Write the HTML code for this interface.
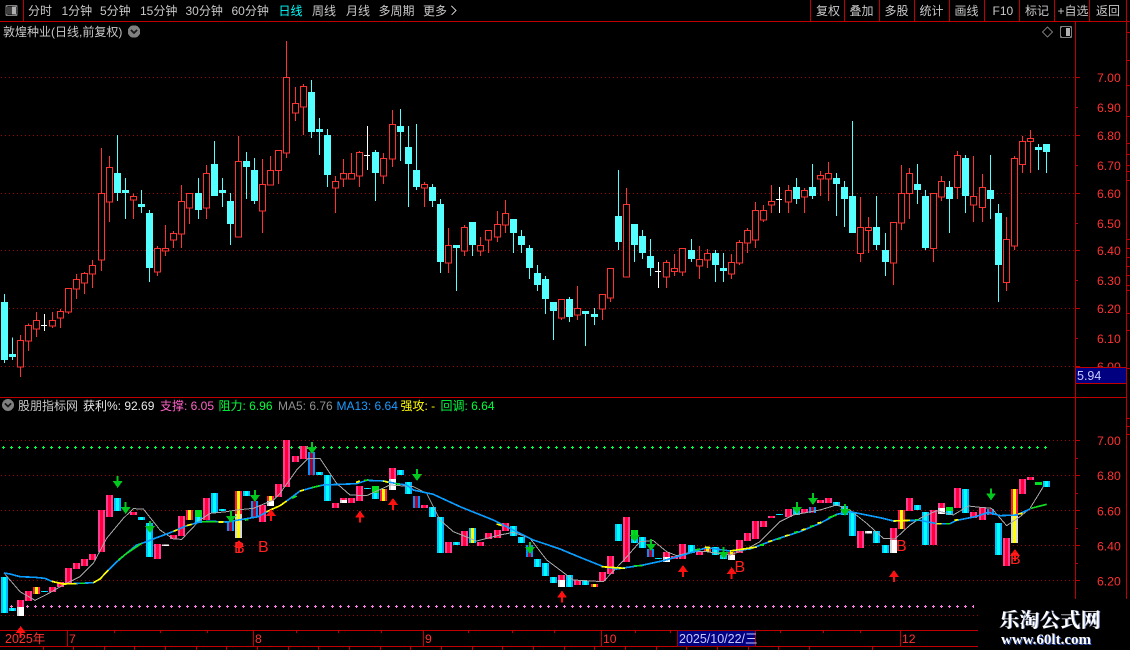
<!DOCTYPE html>
<html><head><meta charset="utf-8"><title>K线</title>
<style>
html,body{margin:0;padding:0;background:#000;width:1130px;height:650px;overflow:hidden}
svg{position:absolute;left:0;top:0;shape-rendering:crispEdges}
text{font-family:"WenQuanYi Zen Hei","Liberation Sans","Noto Sans CJK SC",sans-serif;font-size:12px;fill:#c8c8c8;white-space:pre}
.ax{font-family:"Liberation Sans",sans-serif;fill:#ff3232;font-size:12.2px}
.bb{font-family:"Liberation Sans",sans-serif;fill:#ff2020;font-size:16px}
.bars rect{width:21px}
.r{fill:url(#gr)}.y{fill:url(#gy)}.c{fill:url(#gc)}.w{fill:url(#gw)}.wy{fill:url(#gwy)}.b{fill:url(#gb)}.cy{fill:url(#gcy)}.g{fill:#00e020}
.wm1{position:absolute;left:999px;top:606px;font:bold 20px "Noto Serif CJK SC","Liberation Serif",serif;letter-spacing:.4px;color:#fff;text-shadow:1px 0 #8090c0;white-space:nowrap;line-height:26px}
.wm2{position:absolute;left:1001px;top:632px;font:bold 15px "Liberation Serif",serif;color:#fff;text-shadow:1px 1px #3050b0;white-space:nowrap;line-height:16px}
</style></head><body>
<svg width="1130" height="650" viewBox="0 0 1130 650" xmlns="http://www.w3.org/2000/svg">
<defs>
<linearGradient id="gr"><stop offset=".29" stop-color="#ff3c96"/><stop offset=".29" stop-color="#ff0038"/><stop offset=".71" stop-color="#ff0038"/><stop offset=".71" stop-color="#ff3c96"/></linearGradient>
<linearGradient id="gy"><stop offset=".29" stop-color="#ff1c50"/><stop offset=".29" stop-color="#ffff00"/><stop offset=".71" stop-color="#ffff00"/><stop offset=".71" stop-color="#ff1c50"/></linearGradient>
<linearGradient id="gc"><stop offset=".29" stop-color="#00c8ff"/><stop offset=".29" stop-color="#00ffff"/><stop offset=".71" stop-color="#00ffff"/><stop offset=".71" stop-color="#00b4ff"/></linearGradient>
<linearGradient id="gw"><stop offset=".29" stop-color="#d8d8d8"/><stop offset=".29" stop-color="#ffffff"/></linearGradient>
<linearGradient id="gwy"><stop offset=".29" stop-color="#d8d8d8"/><stop offset=".29" stop-color="#ffff00"/><stop offset=".71" stop-color="#ffff00"/><stop offset=".71" stop-color="#d8d8d8"/></linearGradient>
<linearGradient id="gb"><stop offset=".29" stop-color="#0090ff"/><stop offset=".29" stop-color="#b00028"/><stop offset=".71" stop-color="#b00028"/><stop offset=".71" stop-color="#0090ff"/></linearGradient>
<linearGradient id="gcy"><stop offset=".29" stop-color="#00c8ff"/><stop offset=".29" stop-color="#ffff00"/><stop offset=".71" stop-color="#ffff00"/><stop offset=".71" stop-color="#00c8ff"/></linearGradient>
<path id="dn" fill="#00c81e" d="M-3 0h6V15H15L0 36-15 15H-3z"/>
<path id="up" fill="#ff1010" d="M0 0L15 21H3V36H-3V21H-15z"/>
<pattern id="pg" width="8" height="3" patternUnits="userSpaceOnUse"><rect y="1" width="3" height="1" fill="#00ff40"/><rect x="1" width="1" height="3" fill="#00ff40"/></pattern>
<pattern id="pp" width="8" height="3" patternUnits="userSpaceOnUse"><rect y="1" width="3" height="1" fill="#ff78e0"/><rect x="1" width="1" height="3" fill="#ff78e0"/></pattern>
</defs>

<!-- grid -->
<g stroke="#a00000" stroke-width="1" stroke-dasharray="1 3">
<path d="M1 77.5H1075M1 135.5H1075M1 193.5H1075M1 250.5H1075M1 308.5H1075M1 366.5H1075"/>
<path d="M1 440.5H1075M1 475.5H1075M1 510.5H1075M1 545.5H1075M1 580.5H1075M1 615.5H978"/>
</g>

<!-- toolbar -->
<g stroke="#c00000" stroke-width="1" fill="none">
<path d="M0 21.5H1130M0 397.5H1126M0 630.5H978M0 646.5H978"/>
<path d="M23.5 0V21M810.5 0V21M844.5 0V21M879.5 0V21M914.5 0V21M949.5 0V21M984.5 0V21M1019.5 0V21M1054.5 0V21M1089.5 0V21"/>
<path d="M1075.5 21V599M1126.5 0V599"/>
</g>
<rect x="6" y="5.5" width="11" height="10" rx="1.5" fill="#000" stroke="#808080" stroke-width="1.4"/>
<rect x="7" y="6.5" width="5" height="8" fill="#404040"/>
<rect x="12" y="6.5" width="4" height="8" fill="#b0b0b0"/>
<g>
<text x="28" y="15">分时</text><text x="61.5" y="15">1分钟</text><text x="100" y="15">5分钟</text>
<text x="140" y="15">15分钟</text><text x="185.5" y="15">30分钟</text><text x="231.5" y="15">60分钟</text>
<text x="278.5" y="15" style="fill:#00ffff">日线</text><text x="312" y="15">周线</text><text x="346" y="15">月线</text>
<text x="378.5" y="15">多周期</text><text x="423" y="15">更多</text>
<path d="M451.5 6L456 10.5L451.5 15" fill="none" stroke="#c0c0c0"/>
<text x="816" y="15">复权</text><text x="849.5" y="15">叠加</text><text x="884.5" y="15">多股</text><text x="919.5" y="15">统计</text>
<text x="954.5" y="15">画线</text><text x="992.5" y="15">F10</text><text x="1025" y="15">标记</text><text x="1057.5" y="15">+自选</text><text x="1096" y="15">返回</text>
<text x="3" y="36">敦煌种业(日线,前复权)</text>
</g>
<circle cx="134" cy="31.5" r="6.2" fill="#808080"/>
<path d="M131 30L134 33L137 30" fill="none" stroke="#1a1a1a" stroke-width="1.5"/>
<path d="M1047.5 27L1052.5 32L1047.5 37L1042.5 32Z" fill="none" stroke="#707070"/>
<rect x="1060.5" y="26.5" width="11" height="11" rx="1.5" fill="#000" stroke="#808080" stroke-width="1.4"/>
<rect x="1066" y="28" width="4" height="8" fill="#b0b0b0"/>

<!-- top candles -->
<g transform="translate(.17,40.17) scale(.33333)" stroke-width="3">
<path fill="none" stroke="#ff3232" d="M61 885V1011M85 850V933M109 816V891M157 816V864M181 807V864M205 745V822M229 702V777M253 696V762M277 660V744M304 324V693M328 348V546M400 460V537M472 618V708M496 555V648M520 573V624M544 435V624M568 460V552M619 375V537M715 288V590M787 357V579M811 348V434M835 330V432"/>
<path fill="#000" stroke="#ff3232" d="M52 901h18V980h-18zM76 856h18V902h-18zM100 841h18V866h-18zM148 841h18V857h-18zM172 814h18V833h-18zM196 745h18V815h-18zM220 718h18V746h-18zM244 700h18V728h-18zM268 676h18V701h-18zM295 460h18V659h-18zM319 382h18V485h-18zM391 469h18V479h-18zM463 625h18V695h-18zM487 625h18V632h-18zM511 580h18V599h-18zM535 484h18V581h-18zM559 460h18V503h-18zM610 400h18V503h-18zM706 364h18V590h-18zM778 433h18V513h-18zM802 391h18V434h-18zM826 331h18V391h-18z"/>
<path fill="none" stroke="#54ffff" d="M13 762V969M37 892V960M352 285V483M376 414V537M424 450V519M448 510V726M595 414V537M643 303V468M667 414V501M691 459V615M739 336V477M763 354V492"/>
<path fill="#54ffff" d="M3 786h21V960h-21zM27 942h21V951h-21zM342 399h21V459h-21zM366 450h21V459h-21zM414 492h21V501h-21zM438 519h21V684h-21zM585 459h21V510h-21zM633 372h21V468h-21zM657 450h21V459h-21zM681 483h21V552h-21zM729 363h21V381h-21zM753 390h21V483h-21z"/>
<path fill="none" stroke="#fff" d="M133 822V873M123 856H141"/>
</g>
<g transform="translate(280.17,40.17) scale(.33333)" stroke-width="3">
<path fill="none" stroke="#ff3232" d="M19 3V354M46 141V243M70 132V285M166 408V519M190 357V441M214 339V416M238 333V441M310 339V432M337 210V381M433 426V501M505 564V699M553 555V648M601 591V648M625 571V639M652 513V606M676 480V579"/>
<path fill="#000" stroke="#ff3232" d="M10 112h18V338h-18zM37 190h18V218h-18zM61 139h18V200h-18zM157 424h18V443h-18zM181 400h18V416h-18zM205 400h18V416h-18zM229 337h18V407h-18zM301 355h18V407h-18zM328 253h18V356h-18zM424 433h18V443h-18zM496 616h18V668h-18zM544 562h18V632h-18zM592 616h18V632h-18zM616 571h18V599h-18zM643 553h18V590h-18zM667 520h18V554h-18z"/>
<path fill="none" stroke="#54ffff" d="M94 120V294M118 234V345M142 267V441M286 330V483M361 207V363M385 258V501M409 252V450M457 432V501M481 477V699M529 615V753M577 546V648M700 537V639M724 570V639M748 615V717M772 675V753M796 708V822M820 786V900"/>
<path fill="#54ffff" d="M84 156h21V276h-21zM108 267h21V276h-21zM132 285h21V405h-21zM276 336h21V399h-21zM351 258h21V276h-21zM375 321h21V372h-21zM399 390h21V441h-21zM447 441h21V483h-21zM471 492h21V666h-21zM519 615h21V624h-21zM567 546h21V615h-21zM690 537h21V579h-21zM714 588h21V615h-21zM738 624h21V684h-21zM762 699h21V735h-21zM786 717h21V777h-21zM810 786h21V813h-21z"/>
<path fill="none" stroke="#fff" d="M262 258V390M252 346H270"/>
</g>
<g transform="translate(560.17,40.17) scale(.33333)" stroke-width="3">
<path fill="none" stroke="#ff3232" d="M4 778V840M52 738V840M127 763V840M151 685V786M199 444V710M319 660V744M343 642V708M367 625V708M418 618V717M442 627V684M514 642V717M538 600V675M562 564V639M586 486V624M610 495V546M634 435V519M685 435V519M733 444V519M781 393V468M805 366V483"/>
<path fill="#000" stroke="#ff3232" d="M-5 778h18V833h-18zM43 805h18V824h-18zM118 763h18V806h-18zM142 685h18V773h-18zM190 493h18V710h-18zM310 667h18V710h-18zM334 685h18V694h-18zM358 625h18V695h-18zM409 658h18V677h-18zM433 640h18V659h-18zM505 667h18V701h-18zM529 607h18V668h-18zM553 571h18V608h-18zM577 511h18V599h-18zM601 511h18V539h-18zM625 484h18V494h-18zM676 451h18V485h-18zM724 451h18V470h-18zM772 406h18V416h-18zM796 400h18V416h-18z"/>
<path fill="none" stroke="#54ffff" d="M28 771V846M76 813V918M103 804V855M175 390V630M223 552V666M247 570V657M271 597V708M394 597V666M466 630V726M490 639V726M709 414V492M757 372V477M829 399V528"/>
<path fill="#54ffff" d="M18 777h21V831h-21zM66 813h21V822h-21zM93 822h21V831h-21zM165 528h21V606h-21zM213 552h21V615h-21zM237 588h21V639h-21zM261 648h21V684h-21zM384 630h21V657h-21zM456 639h21V675h-21zM480 684h21V693h-21zM699 441h21V477h-21zM747 441h21V468h-21zM819 414h21V432h-21z"/>
<path fill="none" stroke="#fff" d="M295 666V744M285 694H303M658 441V519M648 478H666"/>
</g>
<g transform="translate(840.17,40.17) scale(.33333)" stroke-width="3">
<path fill="none" stroke="#ff3232" d="M61 471V666M85 531V639M160 547V735M184 375V570M208 384V537M280 460V666M304 408V483M352 333V477M400 348V546M427 402V546M499 531V753M523 348V630M547 288V399M571 270V399"/>
<path fill="#000" stroke="#ff3232" d="M52 562h18V640h-18zM76 562h18V571h-18zM151 547h18V668h-18zM175 460h18V548h-18zM199 400h18V460h-18zM271 460h18V625h-18zM295 424h18V470h-18zM343 346h18V442h-18zM391 469h18V494h-18zM418 442h18V502h-18zM490 598h18V727h-18zM514 355h18V617h-18zM538 304h18V373h-18zM562 295h18V304h-18z"/>
<path fill="none" stroke="#54ffff" d="M13 423V561M37 243V579M109 468V630M136 579V708M232 372V492M256 450V630M328 423V579M376 345V519M451 345V537M475 492V786M595 312V390M619 312V399"/>
<path fill="#54ffff" d="M3 441h21V477h-21zM27 468h21V579h-21zM99 561h21V615h-21zM126 630h21V666h-21zM222 432h21V450h-21zM246 468h21V624h-21zM318 441h21V477h-21zM366 354h21V468h-21zM441 450h21V477h-21zM465 519h21V675h-21zM585 321h21V330h-21zM609 312h21V336h-21z"/>
</g>

<!-- price axis -->
<path stroke="#c00000" fill="none" d="M1075 77.5h5M1075 107.5h3M1075 135.5h5M1075 165.5h3M1075 193.5h5M1075 223.5h3M1075 250.5h5M1075 280.5h3M1075 308.5h5M1075 338.5h3M1075 366.5h5M1126 116.5h4M1126 143.5h4M1126 154.5h4M1126 165.5h4M1126 171.5h4M1126 180.5h4M1126 239.5h4M1126 248.5h4M1126 257.5h4M1126 266.5h4M1126 275.5h4M1126 285.5h4M1126 290.5h4M1126 313.5h4M1126 330.5h4M1126 368.5h4M1126 32.5h4M1126 85.5h4M1126 60.5h4"/>
<g class="axl">
<text class="ax" x="1097" y="82">7.00</text><text class="ax" x="1097" y="112">6.90</text><text class="ax" x="1097" y="140">6.80</text>
<text class="ax" x="1097" y="170">6.70</text><text class="ax" x="1097" y="198">6.60</text><text class="ax" x="1097" y="228">6.50</text>
<text class="ax" x="1097" y="255">6.40</text><text class="ax" x="1097" y="285">6.30</text><text class="ax" x="1097" y="313">6.20</text>
<text class="ax" x="1097" y="343">6.10</text><text class="ax" x="1097" y="371">6.00</text>
</g>
<rect x="1075.5" y="367.5" width="51" height="16" fill="#000080" stroke="#c00000"/>
<text x="1077" y="380" style="fill:#c8c8ff;font-family:'Liberation Sans',sans-serif;font-size:12.5px">5.94</text>

<!-- lower header -->
<circle cx="8" cy="405" r="6" fill="#808080"/>
<path d="M5 403.5L8 406.5L11 403.5" fill="none" stroke="#1a1a1a" stroke-width="1.5"/>
<text x="18" y="410">股朋指标网</text>
<text x="83" y="410" style="fill:#e8e8e8">获利%: 92.69</text>
<text x="160" y="410" style="fill:#ff64c8">支撑: 6.05</text>
<text x="218.5" y="410" style="fill:#00ff40">阻力: 6.96</text>
<text x="278" y="410" style="fill:#909090">MA5: 6.76</text>
<text x="336.5" y="410" style="fill:#1e9cff">MA13: 6.64</text>
<text x="400.5" y="410" style="fill:#ffff00">强攻: -</text>
<text x="440.5" y="410" style="fill:#00ff40">回调: 6.64</text>

<!-- dotted levels -->
<g transform="translate(2,446)"><rect width="350" height="3" fill="url(#pg)"/></g>
<g transform="translate(355,446)"><rect width="344" height="3" fill="url(#pg)"/></g>
<g transform="translate(700,446)"><rect width="347" height="3" fill="url(#pg)"/></g>
<g transform="translate(10,605)"><rect width="320" height="3" fill="url(#pp)"/></g>
<g transform="translate(331,605)"><rect width="320" height="3" fill="url(#pp)"/></g>
<g transform="translate(652,605)"><rect width="322" height="3" fill="url(#pp)"/></g>

<!-- lower bars -->
<g class="bars" transform="translate(0,395) scale(.33333)">
<rect class="c" x="3" y="546" height="108"/><rect class="c" x="27" y="639" height="9"/><rect class="r" x="51" y="615" height="21"/><rect class="w" x="51" y="636" height="27"/><rect class="r" x="75" y="588" height="30"/><rect class="y" x="99" y="576" height="21"/><rect class="c" x="123" y="588" height="3"/><rect class="r" x="147" y="576" height="15"/><rect class="r" x="171" y="561" height="15"/><rect class="r" x="195" y="519" height="45"/><rect class="r" x="219" y="504" height="18"/><rect class="r" x="243" y="492" height="21"/><rect class="r" x="267" y="477" height="18"/><rect class="r" x="294" y="345" height="126"/><rect class="r" x="318" y="300" height="66"/><rect class="c" x="342" y="309" height="39"/><rect class="r" x="390" y="351" height="9"/><rect class="c" x="414" y="366" height="9"/><rect class="c" x="438" y="384" height="102"/><rect class="r" x="462" y="447" height="45"/><rect class="w" x="486" y="449" height="4"/><rect class="r" x="510" y="420" height="12"/><rect class="r" x="534" y="363" height="60"/><rect class="y" x="558" y="345" height="30"/><rect class="g" x="585" y="345" height="21"/><rect class="c" x="585" y="366" height="18"/><rect class="r" x="609" y="309" height="66"/><rect class="c" x="633" y="294" height="60"/><rect class="c" x="657" y="342" height="6"/><rect class="b" x="681" y="379" height="29"/><rect class="y" x="705" y="288" height="69"/><rect class="wy" x="705" y="357" height="72"/><rect class="c" x="729" y="288" height="15"/><rect class="b" x="753" y="318" height="48"/><rect class="r" x="777" y="330" height="51"/><rect class="y" x="801" y="303" height="15"/><rect class="w" x="801" y="318" height="15"/><rect class="r" x="825" y="267" height="39"/><rect class="r" x="849" y="135" height="141"/>
</g>
<g class="bars" transform="translate(280,395) scale(.33333)">
<rect class="r" x="36" y="183" height="18"/><rect class="r" x="60" y="153" height="39"/><rect class="b" x="84" y="171" height="69"/><rect class="c" x="108" y="231" height="9"/><rect class="c" x="132" y="240" height="78"/><rect class="r" x="156" y="324" height="15"/><rect class="r" x="180" y="309" height="6"/><rect class="w" x="180" y="315" height="9"/><rect class="r" x="204" y="309" height="15"/><rect class="r" x="228" y="273" height="45"/><rect class="c" x="252" y="279" height="3"/><rect class="g" x="276" y="273" height="21"/><rect class="c" x="276" y="294" height="18"/><rect class="y" x="300" y="282" height="36"/><rect class="r" x="327" y="219" height="33"/><rect class="w" x="327" y="252" height="33"/><rect class="c" x="351" y="225" height="15"/><rect class="c" x="375" y="261" height="36"/><rect class="b" x="399" y="303" height="36"/><rect class="r" x="423" y="330" height="9"/><rect class="c" x="447" y="336" height="30"/><rect class="c" x="471" y="366" height="108"/><rect class="r" x="495" y="441" height="33"/><rect class="c" x="519" y="441" height="9"/><rect class="r" x="543" y="408" height="45"/><rect class="cy" x="567" y="399" height="45"/><rect class="r" x="591" y="441" height="12"/><rect class="r" x="615" y="414" height="18"/><rect class="r" x="642" y="405" height="24"/><rect class="r" x="666" y="384" height="24"/><rect class="c" x="690" y="393" height="30"/><rect class="c" x="714" y="426" height="18"/><rect class="b" x="738" y="450" height="36"/><rect class="c" x="762" y="492" height="24"/><rect class="c" x="786" y="504" height="39"/><rect class="c" x="810" y="546" height="18"/><rect class="r" x="834" y="540" height="15"/><rect class="w" x="834" y="555" height="21"/><rect class="c" x="858" y="540" height="36"/>
</g>
<g class="bars" transform="translate(560,395) scale(.33333)">
<rect class="r" x="42" y="555" height="15"/><rect class="c" x="66" y="558" height="12"/><rect class="y" x="93" y="567" height="9"/><rect class="r" x="117" y="531" height="27"/><rect class="r" x="141" y="483" height="54"/><rect class="c" x="165" y="387" height="51"/><rect class="r" x="189" y="366" height="135"/><rect class="g" x="213" y="405" height="27"/><rect class="c" x="213" y="432" height="12"/><rect class="c" x="237" y="426" height="33"/><rect class="b" x="261" y="462" height="24"/><rect class="c" x="285" y="489" height="3"/><rect class="r" x="309" y="471" height="15"/><rect class="w" x="309" y="486" height="15"/><rect class="r" x="333" y="483" height="9"/><rect class="r" x="357" y="447" height="45"/><rect class="c" x="384" y="450" height="24"/><rect class="r" x="408" y="468" height="12"/><rect class="y" x="432" y="456" height="15"/><rect class="c" x="456" y="456" height="24"/><rect class="c" x="480" y="480" height="12"/><rect class="y" x="504" y="471" height="9"/><rect class="w" x="504" y="480" height="15"/><rect class="r" x="528" y="435" height="39"/><rect class="r" x="552" y="414" height="24"/><rect class="r" x="576" y="378" height="54"/><rect class="r" x="600" y="378" height="18"/><rect class="r" x="624" y="363" height="6"/><rect class="c" x="648" y="357" height="3"/><rect class="r" x="675" y="342" height="24"/><rect class="c" x="699" y="342" height="18"/><rect class="r" x="723" y="342" height="12"/><rect class="b" x="747" y="336" height="18"/><rect class="r" x="771" y="315" height="9"/><rect class="r" x="795" y="309" height="15"/><rect class="c" x="819" y="321" height="12"/><rect class="c" x="843" y="333" height="27"/>
</g>
<g class="bars" transform="translate(840,395) scale(.33333)">
<rect class="c" x="27" y="351" height="72"/><rect class="r" x="51" y="408" height="51"/><rect class="w" x="75" y="408" height="8"/><rect class="c" x="99" y="408" height="36"/><rect class="c" x="126" y="450" height="24"/><rect class="r" x="150" y="399" height="36"/><rect class="w" x="150" y="435" height="39"/><rect class="y" x="174" y="345" height="57"/><rect class="r" x="198" y="309" height="39"/><rect class="c" x="222" y="330" height="15"/><rect class="c" x="246" y="351" height="99"/><rect class="r" x="270" y="345" height="105"/><rect class="r" x="294" y="324" height="15"/><rect class="w" x="294" y="339" height="18"/><rect class="g" x="318" y="336" height="12"/><rect class="c" x="318" y="348" height="12"/><rect class="r" x="342" y="279" height="60"/><rect class="c" x="366" y="282" height="72"/><rect class="r" x="390" y="351" height="18"/><rect class="r" x="417" y="336" height="39"/><rect class="b" x="441" y="342" height="18"/><rect class="c" x="465" y="384" height="96"/><rect class="r" x="489" y="429" height="84"/><rect class="y" x="513" y="282" height="81"/><rect class="wy" x="513" y="363" height="81"/><rect class="r" x="537" y="252" height="45"/><rect class="r" x="561" y="246" height="9"/><rect class="g" x="585" y="261" height="9"/><rect class="c" x="609" y="258" height="18"/>
</g>

<!-- lines -->
<g fill="none" transform="translate(0,395) scale(.33333)">
<path stroke="#a8a8a8" stroke-width="3" d="M12 534L60 590L105 616L150 593L190 570L240 545L280 505L320 430L370 370L400 341L430 342L480 405L520 432L545 433L600 375L630 355L680 350L710 345L760 340L820 315L840 295L890 225L925 190L960 190L1010 265L1050 300L1100 302L1170 270L1240 275L1280 295L1320 375L1360 410L1430 438L1500 420L1540 412L1590 430L1640 495L1680 525L1720 555L1810 560L1870 497L1920 440L1960 437L2000 470L2030 482L2080 470L2120 470L2190 480L2240 462L2280 440L2340 380L2380 360L2460 345L2510 330L2550 345L2600 385L2650 430L2685 432L2730 390L2760 370L2810 347L2860 360L2905 333L2940 337L2975 340L3020 392L3060 365L3090 340L3130 275"/>
<path stroke="#0a9cff" stroke-width="5" d="M12 534L30 537L60 545L105 547L135 550L155 559L190 567L240 565L280 563L300 552L320 530L345 505L380 475L410 450L440 440L470 428L500 417L530 405L560 392L600 381L630 379L680 381L710 376L775 365L805 348L840 332L860 318L900 288L940 277L970 270L1070 266L1100 256L1150 258L1190 266L1220 270L1240 285L1300 298L1380 335L1480 375L1540 405L1600 435L1680 462L1740 487L1810 515L1850 522L1930 510L1990 497L2060 477L2120 458L2190 468L2250 462L2330 432L2400 410L2460 385L2510 358L2550 350L2580 356L2640 368L2680 378L2760 376L2810 386L2850 386L2870 376L2930 364L2965 352L3000 362L3050 360L3090 342"/>
<g stroke="#ffff00" stroke-width="5">
<path d="M155 559L190 567L230 566M280 563L300 552L325 525M520 409L533 404M560 392L575 388M655 381L670 381M800 350L840 332L860 318M900 288L912 285M1068 262L1080 258M1150 258L1165 262M1490 387L1505 392M1805 515L1875 520M2115 456L2130 458M2190 468L2270 456M2305 440L2317 437M2355 423L2368 420M2405 405L2417 402M2452 385L2464 382M2680 378L2730 376M2810 386L2825 386M2863 376L2875 374M3055 357L3068 355"/>
</g>
<g stroke="#10e020" stroke-width="5">
<path d="M240 565L255 565M355 495L380 475L425 445M605 380L650 380M735 375L745 374M875 310L890 303M935 278L960 272M1092 256L1105 255M1185 266L1200 268M1902 512L1928 512M2085 465L2100 462M2280 450L2292 450M2330 433L2342 430M2382 413L2394 410M2430 395L2442 392M2485 368L2510 360M2745 374L2755 374M2838 386L2850 386M3093 340L3140 328"/>
</g>
</g>

<!-- arrows -->
<g transform="translate(0,395) scale(.33333)">
<use href="#dn" x="353" y="243"/><use href="#dn" x="377" y="321"/><use href="#dn" x="450" y="378"/><use href="#dn" x="693" y="348"/><use href="#dn" x="765" y="285"/>
<use href="#dn" x="936" y="141"/><use href="#dn" x="1251" y="222"/><use href="#dn" x="1590" y="441"/>
<use href="#dn" x="1904" y="405"/><use href="#dn" x="1953" y="432"/><use href="#dn" x="2171" y="456"/><use href="#dn" x="2391" y="321"/><use href="#dn" x="2439" y="294"/><use href="#dn" x="2535" y="327"/><use href="#dn" x="2973" y="280"/>
<use href="#up" x="62" y="693"/><use href="#up" x="717" y="435"/><use href="#up" x="813" y="342"/>
<use href="#up" x="1080" y="347"/><use href="#up" x="1179" y="309"/><use href="#up" x="1686" y="587"/>
<use href="#up" x="2049" y="510"/><use href="#up" x="2195" y="516"/><use href="#up" x="2682" y="525"/><use href="#up" x="3045" y="462"/>
</g>
<text class="bb" x="234" y="553">B</text><text class="bb" x="258" y="552">B</text><text class="bb" x="734.5" y="572">B</text><text class="bb" x="896" y="551">B</text><text class="bb" x="1010" y="564">B</text>

<!-- lower axis -->
<path stroke="#c00000" fill="none" d="M1075 440.5h5M1075 458.5h3M1075 475.5h5M1075 493.5h3M1075 510.5h5M1075 528.5h3M1075 545.5h5M1075 563.5h3M1075 580.5h5M1126 418.5h4M1126 426.5h4M1126 434.5h4"/>
<text class="ax" x="1097" y="445">7.00</text><text class="ax" x="1097" y="480">6.80</text><text class="ax" x="1097" y="515.5">6.60</text><text class="ax" x="1097" y="550.5">6.40</text><text class="ax" x="1097" y="585.5">6.20</text>

<!-- time axis -->
<path stroke="#c00000" fill="none" d="M67.5 630V646M253.5 630V646M423.5 630V646M601.5 630V646M900.5 630V646M114.5 630v3M160.5 630v3M207.5 630v3M296.5 630v3M338.5 630v3M381.5 630v3M468.5 630v3M512.5 630v3M554.5 630v3M635.5 630v3M670.5 630v3M780.5 630v3M823.5 630v3M860.5 630v3M43.5 646v4M73.5 646v4M104.5 646v4M134.5 646v4M165.5 646v4M196.5 646v4M226.5 646v4M257.5 646v4M288.5 646v4M318.5 646v4M349.5 646v4M380.5 646v4M410.5 646v4M441.5 646v4M472.5 646v4M502.5 646v4M533.5 646v4M564.5 646v4M594.5 646v4M625.5 646v4M656.5 646v4M686.5 646v4M717.5 646v4M748.5 646v4M778.5 646v4M809.5 646v4M872.5 646v4"/>
<text x="5" y="643" class="ax" style="font-family:'Liberation Sans','WenQuanYi Zen Hei',sans-serif;font-size:12.5px">2025年</text>
<text class="ax" x="69" y="643">7</text><text class="ax" x="255" y="643">8</text><text class="ax" x="425" y="643">9</text><text class="ax" x="603" y="643">10</text><text class="ax" x="902" y="643">12</text>
<rect x="677.5" y="630.5" width="78" height="16" fill="#000080" stroke="#a00000"/>
<text x="679" y="643" style="fill:#c8c8ff;font-family:'Liberation Sans','WenQuanYi Zen Hei',sans-serif;font-size:12.5px">2025/10/22/三</text>
</svg>
<div class="wm1">乐淘公式网</div>
<div class="wm2">www.60lt.com</div>
</body></html>
